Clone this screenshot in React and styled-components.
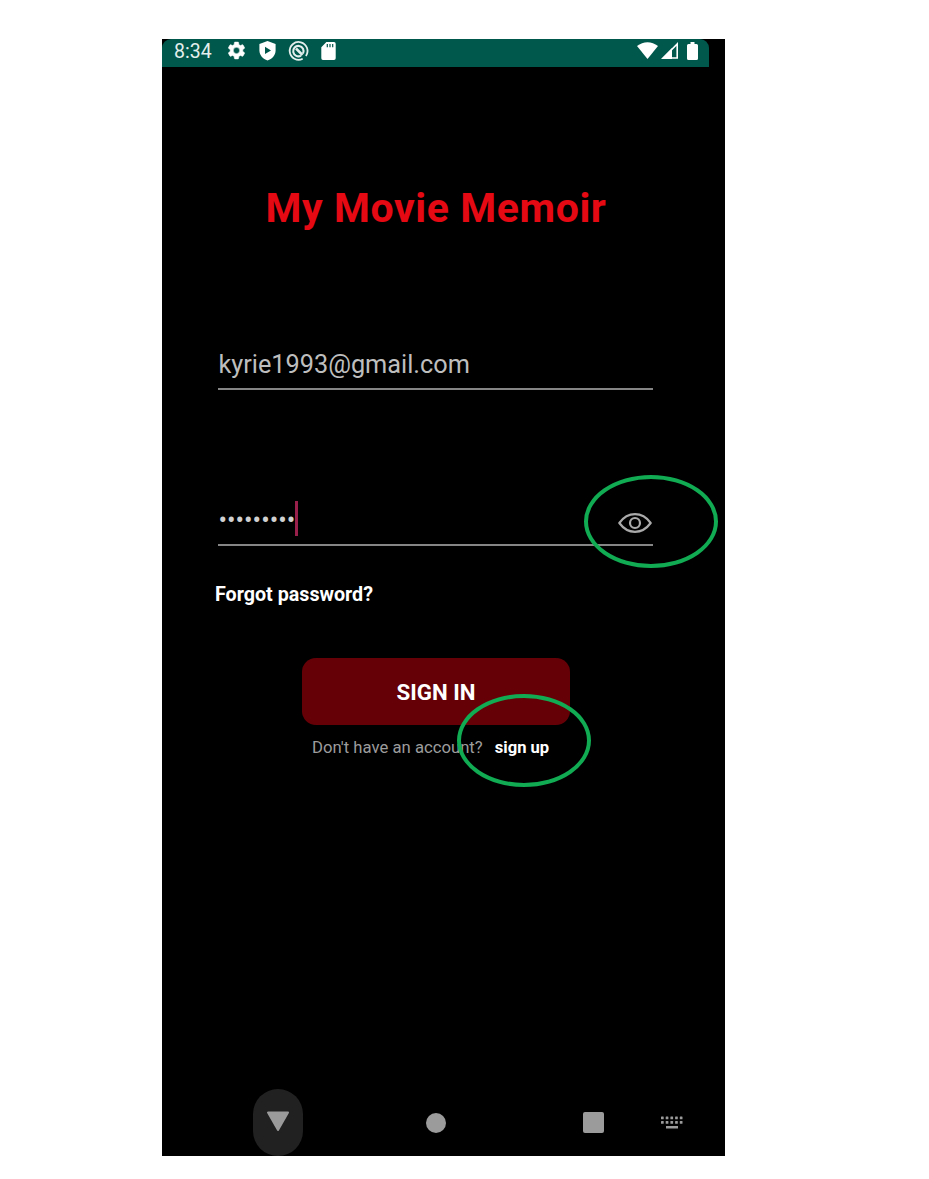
import React from 'react';
import styled, { createGlobalStyle } from 'styled-components';

const GlobalStyle = createGlobalStyle`
  * { box-sizing: border-box; }
  body { margin: 0; background: #fff; font-family: Roboto, "Liberation Sans", sans-serif; }
`;

const Page = styled.main`
  height: 1179px;
  padding: 39px 0 0 162px;
  overflow: hidden;
`;

const Phone = styled.section`
  position: relative;
  display: flex;
  flex-direction: column;
  width: 563px;
  height: 1117px;
  background: #000;
`;

const StatusBar = styled.header`
  display: flex;
  align-items: flex-start;
  justify-content: space-between;
  width: 547px;
  height: 28px;
  padding: 0 8px 0 12px;
  background: #00574b;
  border-radius: 9px 9px 0 0;
  flex: none;
`;

const StatusGroup = styled.div`
  display: flex;
  align-items: center;
  height: 23px;
  gap: ${({ $gap }) => $gap}px;
`;

const Clock = styled.span`
  width: 39px;
  color: #e4efed;
  font-size: 19.5px;
  line-height: 25px;
  padding-top: 1px;
`;

const Icon = styled.svg`
  display: block;
  flex: none;
  overflow: visible;
`;

const Screen = styled.div`
  display: flex;
  flex-direction: column;
  flex: 1;
  width: 547px;
  padding-top: 116px;
`;

const Title = styled.h1`
  margin: 0;
  padding-left: 1px;
  color: #e50914;
  font-size: 41px;
  font-weight: 700;
  line-height: 50px;
  letter-spacing: 0.6px;
  text-align: center;
  white-space: nowrap;
`;

const Field = styled.div`
  display: flex;
  align-items: center;
  width: 435px;
  height: 50px;
  margin: ${({ $top }) => $top}px 0 0 56.4px;
  padding-top: 1px;
  border-bottom: 2px solid #858585;
  color: #bebebe;
  font-size: 25.3px;
  line-height: 48px;
`;

const Dots = styled.span`
  letter-spacing: 0.02px;
  color: #d0d0d0;
`;

const Caret = styled.span`
  width: 3px;
  height: 35px;
  margin-bottom: 4px;
  background: #99204b;
`;

const Toggle = styled.button`
  display: flex;
  margin: 4px 1.5px 0 auto;
  padding: 0;
  border: 0;
  background: none;
`;

const Link = styled.a`
  color: #fff;
  font-weight: 700;
  font-size: ${({ $size }) => $size}px;
  line-height: 24px;
  white-space: nowrap;
`;

const Forgot = styled.div`
  margin: 37px 0 0 53px;
  height: 24px;
  display: flex;
`;

const SignIn = styled.button`
  width: 268px;
  height: 67px;
  margin: 51px 0 0 140px;
  padding: 1px 0 0;
  border: 0;
  border-radius: 14px;
  background: #650007;
  color: #fff;
  font: 700 22.3px/66px Roboto, "Liberation Sans", sans-serif;
`;

const SignUpRow = styled.p`
  display: flex;
  gap: 12px;
  margin: 11px 0 0 150px;
  color: #9c9c9c;
  font-size: 16.7px;
  line-height: 24px;
  white-space: nowrap;
`;

const NavBar = styled.nav`
  display: flex;
  align-items: center;
  width: 563px;
  height: 67px;
  padding-left: 91px;
  flex: none;
`;

const BackPill = styled.div`
  display: flex;
  justify-content: center;
  width: 50px;
  height: 67px;
  padding-top: 22px;
  border-radius: 25px;
  background: #212121;
`;

const HomeDot = styled.div`
  width: 20px;
  height: 20px;
  margin-left: 123px;
  border-radius: 50%;
  background: #9b9b9b;
`;

const RecentSquare = styled.div`
  width: 21px;
  height: 21px;
  margin: 0 57px 0 137px;
  border-radius: 2px;
  background: #9b9b9b;
`;

const Highlight = styled.div`
  position: absolute;
  left: ${({ $x }) => $x}px;
  top: ${({ $y }) => $y}px;
  width: 134px;
  height: 93px;
  border: 4px solid #10ab52;
  border-radius: 50%;
  pointer-events: none;
`;

const Gear = () => (
  <Icon width="21" height="21" viewBox="0 0 24 24" fill="#fff" stroke="#fff" strokeWidth="0.6">
    <path d="M19.14 12.94c.04-.3.06-.61.06-.94 0-.32-.02-.64-.07-.94l2.03-1.58a.49.49 0 0 0 .12-.61l-1.92-3.32a.49.49 0 0 0-.59-.22l-2.39.96c-.5-.38-1.03-.7-1.62-.94l-.36-2.54a.48.48 0 0 0-.48-.41h-3.84a.47.47 0 0 0-.47.41l-.36 2.54c-.59.24-1.13.57-1.62.94l-2.39-.96a.48.48 0 0 0-.59.22L2.74 8.87a.47.47 0 0 0 .12.61l2.03 1.58c-.05.3-.09.63-.09.94s.02.64.07.94l-2.03 1.58a.49.49 0 0 0-.12.61l1.92 3.32c.12.22.37.29.59.22l2.39-.96c.5.38 1.03.7 1.62.94l.36 2.54c.05.24.24.41.48.41h3.84c.24 0 .44-.17.47-.41l.36-2.54c.59-.24 1.13-.56 1.62-.94l2.39.96c.22.08.47 0 .59-.22l1.92-3.32a.47.47 0 0 0-.12-.61zM12 15.6A3.6 3.6 0 1 1 12 8.4a3.6 3.6 0 0 1 0 7.2z" />
  </Icon>
);

const Shield = () => (
  <Icon width="17" height="20" viewBox="0 0 17 20">
    <path d="M8.5 0 .4 3v6.5c0 4.7 3.5 8.6 8.1 10 4.6-1.4 8.1-5.3 8.1-10V3z" fill="#fff" />
    <path d="M6 5.7v7.4l6-3.7z" fill="#00574b" />
  </Icon>
);

const Circle = () => (
  <Icon width="19" height="20" viewBox="0.5 0 19 20" fill="none" stroke="#e4efed">
    <path d="M14.2 17.8A8.9 8.9 0 1 1 17.4 15" strokeWidth="1.8" />
    <path d="M14.5 12.5A5.2 5.2 0 1 0 12.5 14.6" strokeWidth="2.1" />
    <path d="m7.5 7.5 6.5 6.5" strokeWidth="2.5" />
  </Icon>
);

const SdCard = () => (
  <Icon width="15" height="18" viewBox="0 0 15 18">
    <path d="M5.4 0H13a1.7 1.7 0 0 1 1.7 1.7v14.6A1.7 1.7 0 0 1 13 18H2A1.7 1.7 0 0 1 .3 16.3V5.2z" fill="#fff" />
    <path d="M6.3 2v3.3M9 2v3.3m2.7-3.3v3.3" stroke="#00574b" strokeWidth="1.2" />
  </Icon>
);

const Eye = () => (
  <Icon width="34" height="20" viewBox="0 0 34 20" fill="none" stroke="#aaa" strokeWidth="2.2">
    <path d="M1.3 10C5.5 4.3 10.8 1.2 17 1.2S28.5 4.3 32.7 10C28.5 15.7 23.2 18.8 17 18.8S5.5 15.7 1.3 10Z" strokeLinejoin="round" />
    <circle cx="17" cy="10" r="5" />
  </Icon>
);

const Keyboard = () => (
  <Icon width="22" height="13" viewBox="0 0 22 13" fill="#9b9b9b">
    {[0, 4.7, 9.4, 14.1, 18.8].map((x) => (
      <React.Fragment key={x}>
        <rect x={x} y="0.5" width="2.7" height="2.7" rx="0.5" />
        <rect x={x} y="5" width="2.7" height="2.7" rx="0.5" />
      </React.Fragment>
    ))}
    <rect x="5" y="10" width="12" height="2.5" />
  </Icon>
);

export default function App() {
  return (
    <>
      <GlobalStyle />
      <Page>
        <Phone>
          <StatusBar>
            <StatusGroup $gap={12.7}>
              <Clock>8:34</Clock>
              <Gear />
              <Shield />
              <Circle />
              <SdCard />
            </StatusGroup>
            <StatusGroup $gap={2.5}>
              <Icon width="21" height="17" viewBox="0 0 21 17" fill="#fff">
                <path d="M10.5 17 0 4.1C6.3-1.2 14.7-1.2 21 4.1z" />
              </Icon>
              <Icon width="18" height="17" viewBox="0 0 18 17">
                <path d="M16.2 2V16H2.5z" fill="none" stroke="#fff" strokeWidth="1.6" />
                <path d="M0 17 11 6V17z" fill="#fff" />
              </Icon>
              <Icon width="20" height="18" viewBox="0 0 20 18" fill="#fff">
                <path d="M9.5 0h4v2h2q1.5 0 1.5 1.5v13q0 1.5-1.5 1.5h-8Q6 18 6 16.5v-13Q6 2 7.5 2H9.5z" />
              </Icon>
            </StatusGroup>
          </StatusBar>
          <Screen>
            <Title>My Movie Memoir</Title>
            <Field $top={107}>kyrie1993@gmail.com</Field>
            <Field $top={106}>
              <Dots>•••••••••</Dots>
              <Caret />
              <Toggle aria-label="Show password"><Eye /></Toggle>
            </Field>
            <Forgot><Link $size={19.7}>Forgot password?</Link></Forgot>
            <SignIn>SIGN IN</SignIn>
            <SignUpRow>
              <span>Don't have an account?</span>
              <Link $size={16.6}>sign up</Link>
            </SignUpRow>
          </Screen>
          <NavBar>
            <BackPill>
              <Icon width="24" height="21" viewBox="0 0 24 21">
                <path d="M2 1.5h20L12 19z" fill="#9b9b9b" stroke="#9b9b9b" strokeWidth="2" strokeLinejoin="round" />
              </Icon>
            </BackPill>
            <HomeDot />
            <RecentSquare />
            <Keyboard />
          </NavBar>
          <Highlight $x={422} $y={436} />
          <Highlight $x={295} $y={655} />
        </Phone>
      </Page>
    </>
  );
}
